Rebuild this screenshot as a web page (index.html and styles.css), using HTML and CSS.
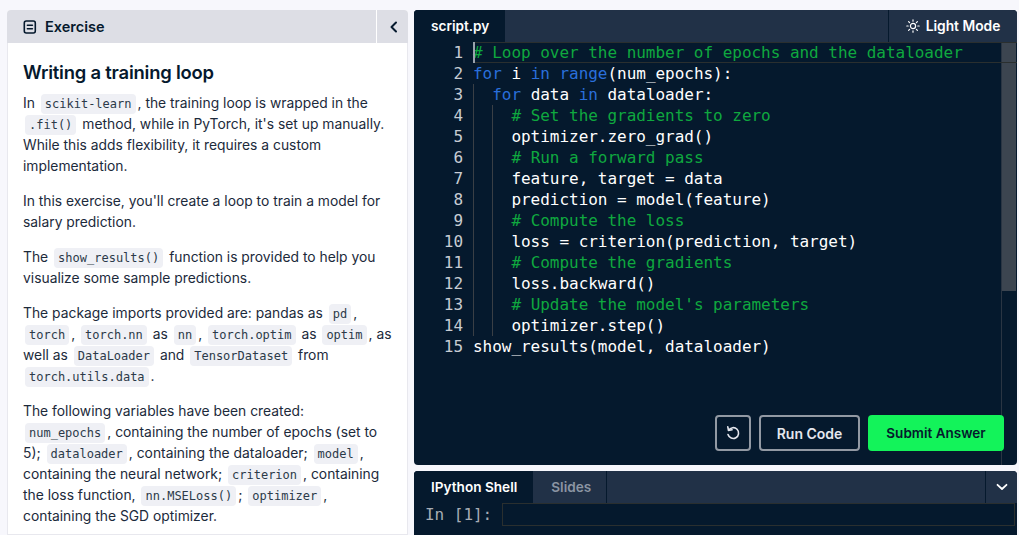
FILE: index.html
```html
<!DOCTYPE html>
<html>
<head>
  <title>Writing a training loop</title>
  <link rel="stylesheet" href="styles.css">
</head>
<body>
  <div class="workspace">
    <section class="exercise">
      <header class="exercise-head">
        <div class="exercise-title">
          <svg width="14" height="14" viewBox="0 0 14 14" fill="none" stroke="#05192d" stroke-width="1.6" stroke-linecap="round">
            <rect x="1.3" y="1" width="11" height="12" rx="2"/>
            <path d="M4.4 5.2h5M4.4 8.8h5"/>
          </svg>
          <span>Exercise</span>
        </div>
        <button class="collapse">
          <svg width="12" height="14" viewBox="0 0 12 14" fill="none" stroke="#05192d" stroke-width="2" stroke-linecap="round" stroke-linejoin="round"><path d="M9 2.5 4.5 7 9 11.5"/></svg>
        </button>
      </header>
      <div class="exercise-body">
        <h1>Writing a training loop</h1>
        <p>In <code>scikit-learn</code>, the training loop is wrapped in the <code>.fit()</code> method, while in PyTorch, it's set up manually. While this adds flexibility, it requires a custom implementation.</p>
        <p>In this exercise, you'll create a loop to train a model for salary prediction.</p>
        <p>The <code>show_results()</code> function is provided to help you visualize some sample predictions.</p>
        <p>The package imports provided are: pandas as <code>pd</code>, <code>torch</code>, <code>torch.nn</code> as <code>nn</code>, <code>torch.optim</code> as <code>optim</code>, as well as <code>DataLoader</code> and <code>TensorDataset</code> from <code>torch.utils.data</code>.</p>
        <p>The following variables have been created: <code>num_epochs</code>, containing the number of epochs (set to 5); <code>dataloader</code>, containing the dataloader; <code>model</code>, containing the neural network; <code>criterion</code>, containing the loss function, <code>nn.MSELoss()</code>; <code>optimizer</code>, containing the SGD optimizer.</p>
      </div>
    </section>

    <div class="right-col">
      <section class="editor">
        <div class="tabbar">
          <div class="tab">script.py</div>
          <button class="mode">
            <svg width="14" height="14" viewBox="0 0 14 14" fill="none" stroke="#fff" stroke-width="1.2" stroke-linecap="round">
              <circle cx="7" cy="7" r="2.6"/>
              <path d="M7 .8v1.4M7 11.8v1.4M.8 7h1.4M11.8 7h1.4M2.6 2.6l1 1M10.4 10.4l1 1M2.6 11.4l1-1M10.4 3.6l1-1"/>
            </svg>
            Light Mode
          </button>
        </div>
        <div class="code-area">
          <div class="gutter">
            <div>1</div><div>2</div><div>3</div><div>4</div><div>5</div><div>6</div><div>7</div><div>8</div><div>9</div><div>10</div><div>11</div><div>12</div><div>13</div><div>14</div><div>15</div>
          </div>
          <pre class="code"><span class="com"># Loop over the number of epochs and the dataloader</span>
<span class="kw">for</span> i <span class="kw">in</span> <span class="kw">range</span>(num_epochs):
  <span class="kw">for</span> data <span class="kw">in</span> dataloader:
    <span class="com"># Set the gradients to zero</span>
    optimizer.zero_grad()
    <span class="com"># Run a forward pass</span>
    feature, target = data
    prediction = model(feature)
    <span class="com"># Compute the loss</span>
    loss = criterion(prediction, target)
    <span class="com"># Compute the gradients</span>
    loss.backward()
    <span class="com"># Update the model's parameters</span>
    optimizer.step()
show_results(model, dataloader)</pre>
          <div class="guide guide-one"></div>
          <div class="guide guide-two"></div>
          <div class="rail"></div>
          <div class="scrollbar"></div>
          <div class="current-line"></div>
          <div class="caret"></div>
          <div class="actions">
            <button class="btn btn-icon">
              <svg width="16" height="16" viewBox="0 0 16 16" fill="none" stroke="#e5e7ee" stroke-width="1.6" stroke-linecap="round" stroke-linejoin="round">
                <path d="M3.6 5.2A5.4 5.4 0 1 1 3 9.6"/>
                <path d="M2.8 1.8l.7 3.6 3.6-.6"/>
              </svg>
            </button>
            <button class="btn btn-run">Run Code</button>
            <button class="btn btn-submit">Submit Answer</button>
          </div>
        </div>
      </section>

      <section class="shell">
        <div class="tabbar">
          <div class="tab">IPython Shell</div>
          <div class="tab tab-off">Slides</div>
          <button class="shell-toggle">
            <svg width="14" height="10" viewBox="0 0 14 10" fill="none" stroke="#fff" stroke-width="1.8" stroke-linecap="round" stroke-linejoin="round"><path d="M2.5 2.8 7 7l4.5-4.2"/></svg>
          </button>
        </div>
        <div class="prompt">
          <span class="prompt-label">In [1]:</span>
          <div class="prompt-input"></div>
        </div>
      </section>
    </div>
  </div>
</body>
</html>
```

FILE: styles.css
```css
* {
  box-sizing: border-box;
}

html, body {
  height: 100%;
}

body {
  margin: 0;
  background: #f7f7fc;
  font-family: Inter, "Noto Sans", sans-serif;
  color: #05192d;
  overflow: hidden;
}

button {
  font-family: inherit;
  cursor: pointer;
}

.workspace {
  display: flex;
  gap: 6px;
  height: 535px;
  padding: 10px 2px 0 7px;
}

/* Exercise panel */
.exercise {
  width: 401px;
  flex: none;
  display: flex;
  flex-direction: column;
  background: #fff;
  border-radius: 4px 4px 0 0;
  overflow: hidden;
}

.exercise-head {
  display: flex;
  justify-content: space-between;
  height: 33px;
  flex: none;
  background: #dddee5;
}

.exercise-title {
  display: flex;
  align-items: center;
  gap: 8px;
  padding-left: 16px;
  font-size: 14.5px;
  font-weight: 600;
}

.collapse {
  width: 32px;
  border: 0;
  border-left: 1px solid #fff;
  background: none;
  display: flex;
  align-items: center;
  justify-content: center;
  padding: 0;
}

.exercise-body {
  flex: 1;
  padding: 16px 12px 0 15px;
  border: 1px solid #e8e8ee;
  border-top: 0;
  overflow: hidden;
}

.exercise-body h1 {
  margin: 0 0 7px;
  font-size: 18.4px;
  font-weight: 600;
  line-height: 27px;
  letter-spacing: -0.2px;
}

.exercise-body p {
  margin: 0 0 14px;
  font-size: 13.85px;
  line-height: 21px;
  color: #1c2a3b;
}

.exercise-body code {
  font-family: "DejaVu Sans Mono", monospace;
  font-size: 12px;
  line-height: 1;
  background: #eff0f5;
  border-radius: 4px;
  padding: 3px 4px;
  margin: 0 2px;
  color: #2c3a49;
}

/* Editor */
.right-col {
  flex: 1;
  display: flex;
  flex-direction: column;
  gap: 6px;
  min-width: 0;
}

.editor {
  height: 455px;
  display: flex;
  flex-direction: column;
  background: #05192d;
  border-radius: 4px;
  overflow: hidden;
}

.tabbar {
  display: flex;
  height: 32px;
  flex: none;
  background: #213147;
  color: #fff;
}

.tab {
  display: flex;
  align-items: center;
  padding: 0 16px 0 17px;
  background: #05192d;
  font-size: 13.6px;
  font-weight: 600;
}

.tab-off {
  background: none;
  color: #8b95a3;
  padding: 0 15px 0 18px;
  border-right: 1px solid #05192d;
}

.mode {
  margin-left: auto;
  width: 129px;
  display: flex;
  align-items: center;
  justify-content: center;
  gap: 6px;
  background: none;
  border: 0;
  border-left: 1px solid #05192d;
  color: #fff;
  font-size: 13.8px;
  font-weight: 600;
}

.code-area {
  position: relative;
  flex: 1;
  display: flex;
}

.gutter {
  width: 59px;
  padding-right: 10px;
  text-align: right;
  color: #c7ccd3;
  font-family: "DejaVu Sans Mono", monospace;
  font-size: 16px;
  letter-spacing: -0.03px;
  line-height: 21px;
}

.code {
  margin: 0;
  color: #fff;
  font-family: "DejaVu Sans Mono", monospace;
  font-size: 16px;
  letter-spacing: -0.03px;
  line-height: 21px;
}

.kw {
  color: #2a6fdb;
}

.com {
  color: #0fa83f;
}

.current-line {
  position: absolute;
  left: 59px;
  right: 0;
  top: 0;
  height: 21px;
  border: 1px solid #2a2f2f;
  border-width: 1px 0;
}

.caret {
  position: absolute;
  left: 59px;
  top: 0;
  width: 2px;
  height: 21px;
  background: #9aa3ad;
}

.guide {
  position: absolute;
  width: 1px;
  background: #3a3f45;
}

.guide-one {
  left: 59px;
  top: 42px;
  height: 252px;
}

.guide-two {
  left: 78px;
  top: 63px;
  height: 231px;
}

.rail {
  position: absolute;
  right: 15px;
  top: 0;
  bottom: 0;
  width: 1px;
  background: #2a3543;
}

.scrollbar {
  position: absolute;
  right: 1px;
  top: 0;
  width: 14px;
  height: 249px;
  background: #3c4550;
}

.actions {
  position: absolute;
  right: 13px;
  bottom: 14px;
  display: flex;
  gap: 8px;
}

.btn {
  height: 36px;
  border-radius: 4px;
  font-size: 14px;
  font-weight: 600;
}

.btn-icon {
  width: 36px;
  padding: 0;
  background: none;
  border: 2px solid #9299a3;
  display: flex;
  align-items: center;
  justify-content: center;
}

.btn-run {
  width: 101px;
  background: none;
  border: 2px solid #9299a3;
  color: #e5e7ee;
}

.btn-submit {
  width: 136px;
  background: #13f35a;
  border: 0;
  color: #05192d;
  font-size: 13.5px;
}

/* Shell */
.shell {
  flex: 1;
  background: #05192d;
  border-radius: 4px 4px 0 0;
  overflow: hidden;
}

.shell-toggle {
  margin-left: auto;
  width: 32px;
  background: none;
  border: 0;
  border-left: 1px solid #05192d;
  padding: 0;
  display: flex;
  align-items: center;
  justify-content: center;
}

.prompt {
  display: flex;
  align-items: center;
  gap: 10px;
  padding: 0 2px 0 11px;
}

.prompt-label {
  font-family: "DejaVu Sans Mono", monospace;
  font-size: 16px;
  letter-spacing: -0.03px;
  color: #a7adb5;
}

.prompt-input {
  flex: 1;
  height: 23px;
  border: 1px solid #2a2f2f;
}
```
